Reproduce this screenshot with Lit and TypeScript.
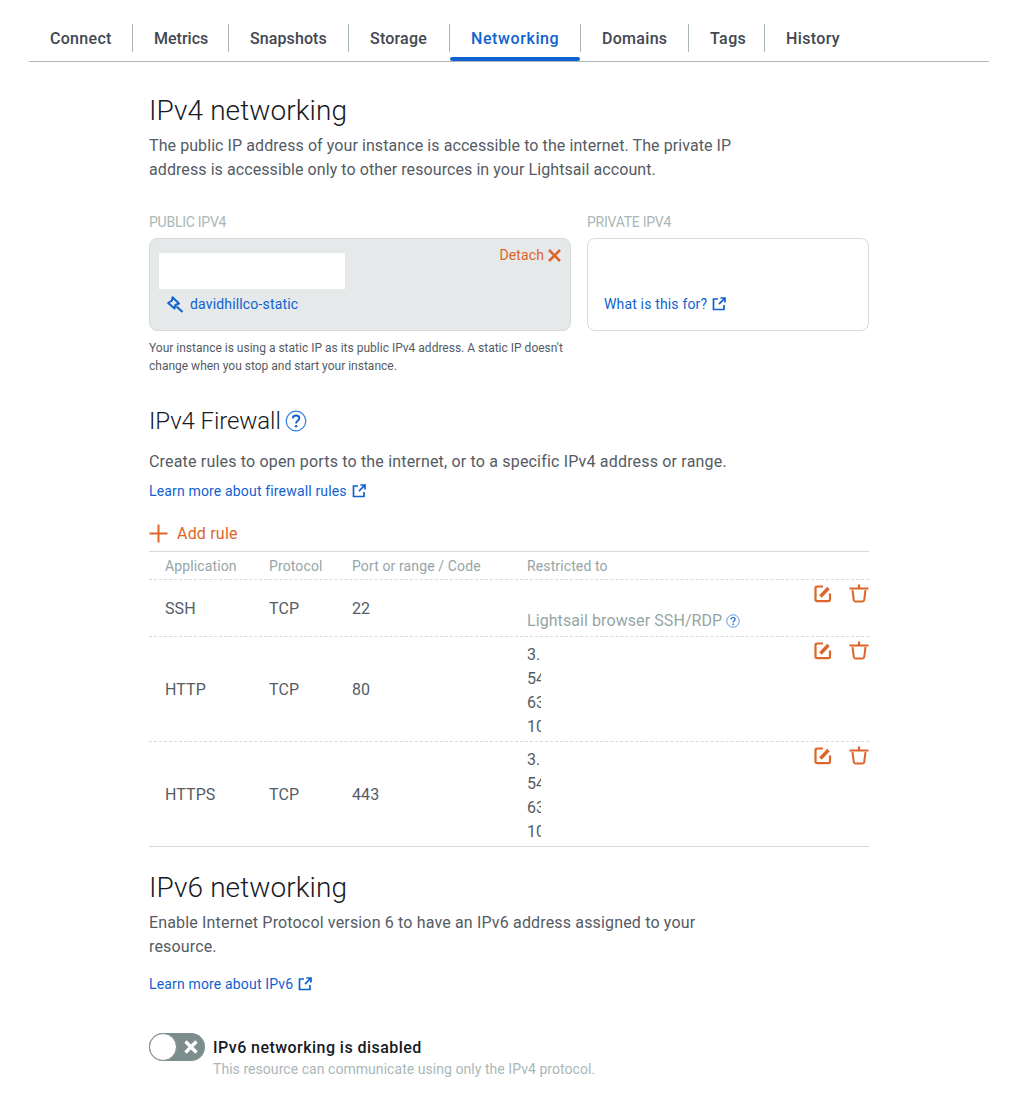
import { LitElement, html, css, svg } from "lit";
import { customElement } from "lit/decorators.js";

const ext = html`<svg class="ext" width="14" height="14" viewBox="0 0 14 14" fill="none" stroke="currentColor" stroke-width="1.7"><path d="M6 2H1.500v10.500H12V8" /><path d="M7 7.200 12.600 1.400M8.400 1h4.600v4.600" /></svg>`;
const help = (s: number) => html`<svg width=${s} height=${s} viewBox="0 0 22 22" fill="none"><circle cx="11" cy="11" r="9.800" stroke="#2b7de0" stroke-width="1.200"/><path d="M7.800 8.600c0-2 1.500-3.100 3.300-3.100s3.200 1.100 3.200 2.800c0 2.600-3.200 2.500-3.200 5.100" stroke="#0f62cf" stroke-width="1.900"/><circle cx="11.100" cy="16.200" r="1.300" fill="#0f62cf"/></svg>`;
const edit = svg`<path d="M9 2.500H3.200C2.200 2.500 1.500 3.200 1.500 4.200v11.300c0 1 .7 1.700 1.700 1.700h11.100c1 0 1.700-.7 1.700-1.700V9.500" stroke-width="2.200" /><path d="M6.500 12.500 14.500 4" stroke-width="3.400"/>`;
const trash = svg`<path d="M0.500 4.500H19.500M10 0.500V4" stroke-width="2.200"/><path d="M3.500 6 4.800 16c.1 1 .7 1.500 1.700 1.500h7c1 0 1.600-.5 1.700-1.500L16.500 6" stroke-width="2"/>`;

const TABS: { label: string; width: number; spacing: number }[] = [
  { label: "Connect", width: 103, spacing: 0.3 },
  { label: "Metrics", width: 96, spacing: 0 },
  { label: "Snapshots", width: 120, spacing: 0.1 },
  { label: "Storage", width: 101, spacing: 0.2 },
  { label: "Networking", width: 131, spacing: 0.6 },
  { label: "Domains", width: 108, spacing: 0.3 },
  { label: "Tags", width: 76, spacing: 0.4 },
  { label: "History", width: 96, spacing: 0.35 },
];

@customElement("app-root")
export class AppRoot extends LitElement {
  static styles = css`
    :host { display: block; font-family: Roboto, "Noto Sans", sans-serif; color: #545b64; background: #fff; height: 1106px; box-sizing: border-box; padding: 0 24px 0 29px; font-size: 16px; letter-spacing: .08px; }
    a { color: #0f62cf; text-decoration: none; letter-spacing: .16px; }
    .tabs { display: flex; border-bottom: 1px solid #aab7b8; height: 62px; box-sizing: border-box; padding-top: 24px; }
    .tab { position: relative; box-sizing: border-box; flex: none; height: 28px; line-height: 29px; padding-left: 21px; font-size: 16px; font-weight: 500; color: #414750; border-left: 1px solid #aab7b8; white-space: nowrap; }
    .tab:first-child { border-left: none; }
    .tab.active { color: #0f62cf; }
    .tab.active::after { content: ""; position: absolute; left: 0; right: 0; bottom: -9px; height: 4px; background: #0f62cf; border-radius: 2px; }
    main { width: 720px; margin-left: 120px; }
    h1 { font-size: 28px; line-height: 36px; font-weight: 300; color: #16191f; margin: 0; }
    h2 { font-size: 24px; line-height: 32px; font-weight: 300; color: #16191f; margin: 0; display: flex; align-items: center; gap: 4px; letter-spacing: -.1px; }
    p { margin: 0; line-height: 24px; font-size: 16px; }
    .h-first { margin-top: 31px; }
    .lead { margin-top: 5px; max-width: 600px; }
    .cards { display: grid; grid-template-columns: 422px 282px; gap: 16px; margin-top: 30px; }
    .label { font-size: 14px; line-height: 20px; color: #aab7b8; margin-bottom: 6px; letter-spacing: -.25px; }
    .card { height: 93px; box-sizing: border-box; border: 1px solid #d5dbdb; border-radius: 8px; background: #fff; display: flex; flex-direction: column; }
    .card.pub { background: #e5e9ea; padding: 14px 9px 0; }
    .card.priv { padding: 55px 16px 0; font-size: 14px; }
    .top { display: flex; justify-content: space-between; }
    .masked { width: 186px; height: 36px; background: #fff; }
    .detach { display: flex; align-items: center; gap: 4px; height: 4px; color: #dd6529; font-size: 14px; line-height: 4px; letter-spacing: .1px; }
    .static { display: flex; align-items: center; gap: 7px; margin: 4px 0 0 8px; height: 22px; font-size: 14px; }
    .linkline { display: inline-flex; align-items: center; gap: 5px; font-size: 14px; line-height: 20px; }
    .ext { flex: none; }
    .note { font-size: 12px; line-height: 18px; width: 422px; margin-top: 8px; letter-spacing: 0; }
    .fw { margin-top: 30px; }
    .fw-p { margin-top: 13px; letter-spacing: .18px; }
    .fw-link { margin-top: 7px; height: 20px; }
    .add { display: flex; align-items: center; gap: 9px; color: #dd6529; margin-top: 20px; height: 24px; letter-spacing: .2px; }
    .table { margin-top: 6px; border-top: 1px solid #d5dbdb; border-bottom: 1px solid #d5dbdb; font-size: 16px; }
    .row { display: grid; grid-template-columns: 104px 83px 175px 1fr auto; padding-left: 16px; border-bottom: 1px dashed #d5dbdb; }
    .row:last-child { border-bottom: none; }
    .row.head { height: 28px; box-sizing: border-box; align-items: center; font-size: 14px; color: #95a5a6; font-weight: 400; padding-top: 1px; letter-spacing: .12px; }
    .cell { align-self: center; }
    .row.ssh { height: 57px; box-sizing: border-box; }
    .row.web { height: 105px; box-sizing: border-box; }
    .row.web:last-child { height: 104px; }
    .restr { padding-top: 6px; line-height: 24px; }
    .ssh .restr { align-self: end; padding: 0 0 3px; color: #95a5a6; display: flex; align-items: center; gap: 4px; white-space: nowrap; }
    .ip { display: block; width: 14px; height: 24px; overflow: hidden; white-space: nowrap; }
    .actions { display: flex; gap: 17px; padding-top: 4px; align-items: flex-start; }
    .actions svg { fill: none; stroke: #dd6529; display: block; }
    .v6 { margin-top: 23px; }
    .v6-p { margin-top: 5px; max-width: 600px; letter-spacing: .16px; }
    .v6-link { margin-top: 15px; height: 20px; }
    .toggle-row { display: flex; gap: 8px; margin-top: 39px; }
    .toggle { position: relative; flex: none; width: 56px; height: 28px; border-radius: 14px; background: #7d8c8c; display: flex; align-items: center; justify-content: flex-end; padding-right: 7px; box-sizing: border-box; }
    .knob { position: absolute; left: 0; top: 0; width: 28px; height: 28px; box-sizing: border-box; border-radius: 50%; background: #fff; border: 1.500px solid #7d8c8c; }
    .t-title { font-weight: 500; color: #16191f; line-height: 30px; letter-spacing: .45px; }
    .t-sub { font-size: 14px; line-height: 16px; color: #aab7b8; margin-top: -2px; letter-spacing: .05px; }
  `;

  private row(app: string, proto: string, port: string) {
    return html`<div class="row web">
      <div class="cell">${app}</div><div class="cell">${proto}</div><div class="cell">${port}</div>
      <div class="restr">${["3.", "54.", "63.", "10."].map((t) => html`<span class="ip">${t}</span>`)}</div>
      ${this.actions()}
    </div>`;
  }

  private actions() {
    return html`<div class="actions">
      <svg width="18" height="19" viewBox="0 0 18 19">${edit}</svg>
      <svg width="20" height="19" viewBox="0 0 20 19">${trash}</svg>
    </div>`;
  }

  render() {
    return html`
      <nav class="tabs">
        ${TABS.map((t) => html`<div class="tab ${t.label === "Networking" ? "active" : ""}" style="width:${t.width}px;letter-spacing:${t.spacing}px">${t.label}</div>`)}
      </nav>
      <main>
        <h1 class="h-first">IPv4 networking</h1>
        <p class="lead">The public IP address of your instance is accessible to the internet. The private IP address is accessible only to other resources in your Lightsail account.</p>
        <div class="cards">
          <div>
            <div class="label">PUBLIC IPV4</div>
            <div class="card pub">
              <div class="top">
                <div class="masked"></div>
                <div class="detach">Detach
                  <svg width="13" height="13" viewBox="0 0 13 13" stroke="#dd6529" stroke-width="2.500" fill="none"><path d="M1 1l11 11M12 1 1 12"/></svg>
                </div>
              </div>
              <a class="static">
                <svg width="16" height="17" viewBox="0 0 16 17" fill="none" stroke="#0f62cf" stroke-width="2" stroke-linejoin="round"><path d="M5.500 1.200 5 4.500 1.200 7l6.300 5.500 1-3.500 3.500-1.500Z"/><path d="M9.500 10.500 15.500 16"/></svg>
                davidhillco-static
              </a>
            </div>
          </div>
          <div>
            <div class="label">PRIVATE IPV4</div>
            <div class="card priv"><a class="linkline">What is this for? ${ext}</a></div>
          </div>
        </div>
        <div class="note">Your instance is using a static IP as its public IPv4 address. A static IP doesn't change when you stop and start your instance.</div>

        <h2 class="fw">IPv4 Firewall ${help(22)}</h2>
        <p class="fw-p">Create rules to open ports to the internet, or to a specific IPv4 address or range.</p>
        <div class="fw-link"><a class="linkline">Learn more about firewall rules ${ext}</a></div>
        <div class="add">
          <svg width="19" height="19" viewBox="0 0 19 19" stroke="#dd6529" stroke-width="2" fill="none"><path d="M9.500 .5v18M.5 9.500h18"/></svg>
          Add rule
        </div>
        <div class="table">
          <div class="row head"><div>Application</div><div>Protocol</div><div>Port or range / Code</div><div>Restricted to</div></div>
          <div class="row ssh">
            <div class="cell">SSH</div><div class="cell">TCP</div><div class="cell">22</div>
            <div class="restr">Lightsail browser SSH/RDP ${help(14)}</div>
            ${this.actions()}
          </div>
          ${this.row("HTTP", "TCP", "80")}
          ${this.row("HTTPS", "TCP", "443")}
        </div>

        <h1 class="v6">IPv6 networking</h1>
        <p class="v6-p">Enable Internet Protocol version 6 to have an IPv6 address assigned to your resource.</p>
        <div class="v6-link"><a class="linkline">Learn more about IPv6 ${ext}</a></div>
        <div class="toggle-row">
          <div class="toggle"><span class="knob"></span>
            <svg width="14" height="14" viewBox="0 0 14 14" stroke="#fff" stroke-width="3.400" fill="none"><path d="M1.500 1.500l11 11M12.500 1.500l-11 11"/></svg>
          </div>
          <div>
            <div class="t-title">IPv6 networking is disabled</div>
            <div class="t-sub">This resource can communicate using only the IPv4 protocol.</div>
          </div>
        </div>
      </main>
    `;
  }
}
